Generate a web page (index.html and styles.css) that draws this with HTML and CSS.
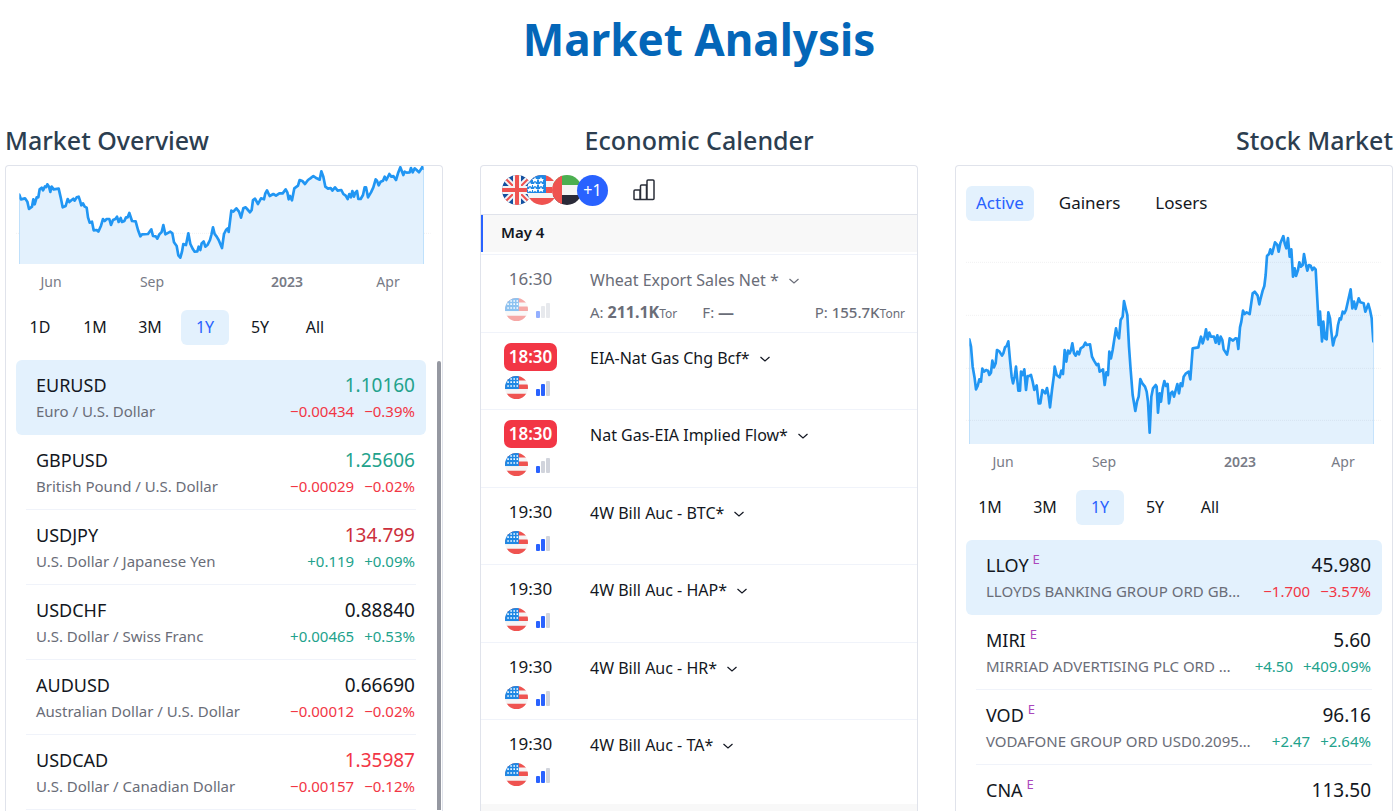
FILE: index.html
```html
<!DOCTYPE html>
<html lang="en">
<head>
    <meta charset="UTF-8">
    <meta name="viewport" content="width=device-width, initial-scale=1.0">
    <title>Market Analysis</title>
    <link rel="stylesheet" href="styles.css">
</head>
<body>
    <!-- shared icons -->
    <svg class="sprite" aria-hidden="true">
        <defs>
            <clipPath id="round"><circle cx="15" cy="15" r="15"/></clipPath>
            <symbol id="flag-us" viewBox="0 0 30 30">
                <g clip-path="url(#round)">
                    <rect width="30" height="30" fill="#f5f5f5"/>
                    <path d="M0 0h30v6H0zM0 11h30v6H0zM0 23h30v7H0z" fill="#ef5350"/>
                    <rect width="18" height="17" fill="#1e88e5"/>
                    <path d="M7 4h2M11 4h2M15 4h2M3 8h2M7 8h2M11 8h2M15 8h2M3 13h2M7 13h2M11 13h2M15 13h2" stroke="#fff" stroke-width="2"/>
                </g>
            </symbol>
            <symbol id="flag-us-big" viewBox="0 0 30 30">
                <g clip-path="url(#round)">
                    <rect width="30" height="30" fill="#f5f5f5"/>
                    <path d="M0 0h30v6H0zM0 12h30v6H0zM0 23h30v7H0z" fill="#ef5350"/>
                    <rect width="19" height="18" fill="#1e88e5"/>
                    <path d="M7 4l1-2 1 2 2 0-1 1 0 2-2-1-2 1 0-2-1-1zM13 4l1-2 1 2 2 0-1 1 0 2-2-1-2 1 0-2-1-1zM2 9l1-2 1 2 2 0-1 1 0 2-2-1-2 1 0-2-1-1zM7 9l1-2 1 2 2 0-1 1 0 2-2-1-2 1 0-2-1-1zM13 9l1-2 1 2 2 0-1 1 0 2-2-1-2 1 0-2-1-1zM2 14l1-2 1 2 2 0-1 1 0 2-2-1-2 1 0-2-1-1zM7 14l1-2 1 2 2 0-1 1 0 2-2-1-2 1 0-2-1-1zM13 14l1-2 1 2 2 0-1 1 0 2-2-1-2 1 0-2-1-1z" fill="#fff"/>
                </g>
            </symbol>
            <symbol id="flag-gb" viewBox="0 0 30 30">
                <g clip-path="url(#round)">
                    <rect width="30" height="30" fill="#1450a0"/>
                    <path d="M0 0l30 30M30 0L0 30" stroke="#f5f5f5" stroke-width="6"/>
                    <path d="M0 0l30 30M30 0L0 30" stroke="#ef5350" stroke-width="2"/>
                    <path d="M15 0v30M0 15h30" stroke="#f5f5f5" stroke-width="8"/>
                    <path d="M15 0v30M0 15h30" stroke="#ef5350" stroke-width="4"/>
                </g>
            </symbol>
            <symbol id="flag-ae" viewBox="0 0 30 30">
                <g clip-path="url(#round)">
                    <rect width="30" height="10" fill="#4caf50"/>
                    <rect y="10" width="30" height="10" fill="#f5f5f5"/>
                    <rect y="20" width="30" height="10" fill="#2a2a38"/>
                    <rect width="10" height="30" fill="#ef5350"/>
                </g>
            </symbol>
            <symbol id="bars" viewBox="0 0 14 16">
                <rect class="bar-1" x="0" y="9" width="4" height="7" rx="1"/>
                <rect class="bar-2" x="5" y="4" width="4" height="12" rx="1"/>
                <rect class="bar-3" x="10" y="1" width="4" height="15" rx="1"/>
            </symbol>
            <symbol id="chevron" viewBox="0 0 10 6">
                <path d="M0.500 1l4.500 4 4.500-4" fill="none" stroke="currentColor" stroke-width="1.200"/>
            </symbol>
        </defs>
    </svg>

    <h1>Market Analysis</h1>

    <main class="columns">
        <section class="column">
            <h2>Market Overview</h2>
            <div class="widget">
                <svg class="chart" viewBox="18 168 1308 294" preserveAspectRatio="none" role="img" aria-label="EURUSD, one year">
                    <path class="grid-line" d="M48 370H1292"/>
                    <path class="area" d="M54 470V254H58L63 268 75 265 82 275 87 297 96 290 100 268 104 283 110 262 115 262 119 238 125 233 129 241 135 229 139 231 142 223 147 230 151 246 155 230 161 238 176 236 182 262 188 292 197 288 203 267 208 276 215 270 220 266 224 272 230 262 236 260 240 272 244 286 249 280 254 290 260 293 264 322 269 338 276 335 281 361 290 360 295 365 303 347 309 327 314 333 320 327 328 327 333 345 339 330 346 327 351 320 356 336 362 324 366 336 373 333 378 322 383 322 388 309 396 333 407 334 414 360 421 379 426 373 444 372 454 358 459 378 467 379 472 386 478 373 485 366 490 345 496 373 511 365 517 370 522 397 530 408 535 436 541 443 546 425 550 402 558 405 565 370 571 402 579 418 584 425 592 424 596 410 601 420 605 400 611 394 616 410 623 404 630 390 634 375 639 352 644 372 650 380 656 390 666 414 672 372 678 360 683 355 686 366 694 302 700 305 709 295 717 305 723 323 730 295 737 292 744 300 750 307 755 300 759 270 765 266 774 282 783 265 792 268 796 250 801 241 809 258 820 252 828 257 838 250 848 250 857 238 862 247 866 268 870 258 876 271 883 235 894 227 899 210 907 213 915 222 924 210 931 205 940 198 950 205 959 209 964 184 970 200 976 230 984 236 992 234 997 242 1005 232 1013 242 1024 240 1030 252 1037 257 1043 267 1048 252 1053 262 1057 243 1062 260 1066 248 1071 243 1075 267 1082 267 1089 255 1094 232 1098 232 1104 262 1113 247 1120 232 1127 208 1131 212 1136 226 1142 215 1149 212 1154 200 1159 210 1168 192 1174 200 1180 198 1188 210 1194 190 1201 172 1210 195 1214 185 1220 188 1229 187 1233 174 1238 187 1244 175 1250 180 1257 187 1263 178 1267 171 1271 176H1275V470"/>
                </svg>
                <div class="axis">
                    <span>Jun</span><span>Sep</span><span class="year">2023</span><span>Apr</span>
                </div>
                <div class="ranges">
                    <button type="button">1D</button>
                    <button type="button">1M</button>
                    <button type="button">3M</button>
                    <button type="button" class="active">1Y</button>
                    <button type="button">5Y</button>
                    <button type="button">All</button>
                </div>
                <div class="quotes scrolled">
                    <div class="quote active">
                        <div class="symbol">EURUSD</div><div class="price up">1.10160</div>
                        <div class="name">Euro / U.S. Dollar</div><div class="change down"><span>−0.00434</span><span>−0.39%</span></div>
                    </div>
                    <div class="quote">
                        <div class="symbol">GBPUSD</div><div class="price up">1.25606</div>
                        <div class="name">British Pound / U.S. Dollar</div><div class="change down"><span>−0.00029</span><span>−0.02%</span></div>
                    </div>
                    <div class="quote">
                        <div class="symbol">USDJPY</div><div class="price falling">134.799</div>
                        <div class="name">U.S. Dollar / Japanese Yen</div><div class="change up"><span>+0.119</span><span>+0.09%</span></div>
                    </div>
                    <div class="quote">
                        <div class="symbol">USDCHF</div><div class="price">0.88840</div>
                        <div class="name">U.S. Dollar / Swiss Franc</div><div class="change up"><span>+0.00465</span><span>+0.53%</span></div>
                    </div>
                    <div class="quote">
                        <div class="symbol">AUDUSD</div><div class="price">0.66690</div>
                        <div class="name">Australian Dollar / U.S. Dollar</div><div class="change down"><span>−0.00012</span><span>−0.02%</span></div>
                    </div>
                    <div class="quote">
                        <div class="symbol">USDCAD</div><div class="price down">1.35987</div>
                        <div class="name">U.S. Dollar / Canadian Dollar</div><div class="change down"><span>−0.00157</span><span>−0.12%</span></div>
                    </div>
                    <div class="scroll-thumb"></div>
                </div>
            </div>
        </section>

        <section class="column">
            <h2 class="center">Economic Calender</h2>
            <div class="widget">
                <div class="filters">
                    <button type="button" class="countries" aria-label="Countries">
                        <svg><use href="#flag-gb"/></svg>
                        <svg><use href="#flag-us-big"/></svg>
                        <svg><use href="#flag-ae"/></svg>
                        <span class="more">+1</span>
                    </button>
                    <button type="button" class="importance" aria-label="Importance">
                        <svg viewBox="0 0 22 22" fill="none" stroke="#2a2e39" stroke-width="1.500">
                            <path d="M1 20.500V12q0-1 1-1h5v9.500M7.500 20.500V7q0-1 1-1h5v14.500M14 20.500V2q0-1 1-1h5q1 0 1 1v17.500q0 1-1 1H2q-1 0-1-1"/>
                        </svg>
                    </button>
                </div>
                <h3 class="day">May 4</h3>
                <div class="events">
                    <div class="event past">
                        <div class="when">
                            <time>16:30</time>
                            <div class="marks"><svg class="flag"><use href="#flag-us"/></svg><svg class="bars low"><use href="#bars"/></svg></div>
                        </div>
                        <div class="what">
                            <div class="title">Wheat Export Sales Net * <svg class="chevron"><use href="#chevron"/></svg></div>
                            <div class="figures">
                                <span>A: <b>211.1K</b><small>Tor</small></span>
                                <span>F: <b>—</b></span>
                                <span>P: <em>155.7K</em><small>Tonr</small></span>
                            </div>
                        </div>
                    </div>
                    <div class="event">
                        <div class="when">
                            <time class="soon">18:30</time>
                            <div class="marks"><svg class="flag"><use href="#flag-us"/></svg><svg class="bars"><use href="#bars"/></svg></div>
                        </div>
                        <div class="what"><div class="title">EIA-Nat Gas Chg Bcf* <svg class="chevron"><use href="#chevron"/></svg></div></div>
                    </div>
                    <div class="event">
                        <div class="when">
                            <time class="soon">18:30</time>
                            <div class="marks"><svg class="flag"><use href="#flag-us"/></svg><svg class="bars low"><use href="#bars"/></svg></div>
                        </div>
                        <div class="what"><div class="title">Nat Gas-EIA Implied Flow* <svg class="chevron"><use href="#chevron"/></svg></div></div>
                    </div>
                    <div class="event">
                        <div class="when">
                            <time>19:30</time>
                            <div class="marks"><svg class="flag"><use href="#flag-us"/></svg><svg class="bars"><use href="#bars"/></svg></div>
                        </div>
                        <div class="what"><div class="title">4W Bill Auc - BTC* <svg class="chevron"><use href="#chevron"/></svg></div></div>
                    </div>
                    <div class="event">
                        <div class="when">
                            <time>19:30</time>
                            <div class="marks"><svg class="flag"><use href="#flag-us"/></svg><svg class="bars"><use href="#bars"/></svg></div>
                        </div>
                        <div class="what"><div class="title">4W Bill Auc - HAP* <svg class="chevron"><use href="#chevron"/></svg></div></div>
                    </div>
                    <div class="event">
                        <div class="when">
                            <time>19:30</time>
                            <div class="marks"><svg class="flag"><use href="#flag-us"/></svg><svg class="bars"><use href="#bars"/></svg></div>
                        </div>
                        <div class="what"><div class="title">4W Bill Auc - HR* <svg class="chevron"><use href="#chevron"/></svg></div></div>
                    </div>
                    <div class="event">
                        <div class="when">
                            <time>19:30</time>
                            <div class="marks"><svg class="flag"><use href="#flag-us"/></svg><svg class="bars"><use href="#bars"/></svg></div>
                        </div>
                        <div class="what"><div class="title">4W Bill Auc - TA* <svg class="chevron"><use href="#chevron"/></svg></div></div>
                    </div>
                </div>
                <div class="next-day"></div>
            </div>
        </section>

        <section class="column">
            <h2 class="right">Stock Market</h2>
            <div class="widget stocks">
                <div class="tabs">
                    <button type="button" class="active">Active</button>
                    <button type="button">Gainers</button>
                    <button type="button">Losers</button>
                </div>
                <svg class="chart" viewBox="18 330 1308 642" preserveAspectRatio="none" role="img" aria-label="LLOY, one year">
                    <path class="area" d="M54 980V658H58L63 680 68 740 74 775 78 808 83 798 88 778 93 785 97 746 102 755 108 750 114 752 118 765 123 758 127 722 132 742 137 730 141 690 148 694 156 707 160 700 165 682 170 678 175 664 180 720 185 770 189 790 194 770 198 740 205 812 210 812 213 755 218 765 223 748 228 810 233 768 238 768 243 765 248 785 253 810 260 796 266 850 271 850 277 810 286 820 291 804 296 830 300 862 306 810 312 765 314 740 320 765 329 772 334 752 339 762 344 690 349 725 354 692 359 700 363 690 367 670 372 700 377 707 382 695 387 703 392 685 400 680 406 668 410 675 420 673 426 710 432 722 440 735 445 732 449 755 454 752 459 748 464 795 469 757 474 765 478 695 483 715 488 690 498 625 502 645 507 655 512 600 518 590 522 543 527 565 532 585 537 680 542 750 548 825 556 873 561 845 566 830 571 777 577 790 585 800 590 815 594 845 599 938 604 830 609 805 617 795 620 800 624 878 629 820 633 845 638 805 643 783 648 798 653 792 657 850 662 820 667 815 672 830 682 792 687 820 692 790 697 798 701 770 708 760 716 755 721 778 728 685 745 682 749 665 753 650 758 670 764 650 768 628 773 658 778 638 783 650 792 650 797 668 802 646 807 672 812 650 817 660 821 688 831 704 835 685 839 655 849 662 856 655 861 656 865 687 870 622 874 605 879 572 884 582 890 577 899 582 908 520 914 515 923 527 928 553 932 535 938 512 943 498 947 465 951 408 957 402 961 388 966 402 975 367 982 375 986 395 991 370 1000 348 1004 370 1009 385 1014 354 1019 410 1024 388 1029 470 1034 445 1038 468 1044 450 1048 427 1053 440 1058 435 1062 402 1067 430 1072 452 1077 435 1082 437 1087 450 1092 443 1097 448 1102 540 1106 615 1110 575 1116 664 1120 605 1125 655 1130 658 1135 577 1140 595 1144 635 1149 676 1154 655 1160 645 1164 615 1169 595 1173 598 1178 575 1183 580 1188 570 1202 508 1207 565 1212 545 1217 567 1226 535 1231 547 1241 550 1246 575 1255 552 1260 570 1265 595 1270 664H1274V980"/>
                    <path class="grid-line" d="M48 427H1292M48 586H1292M48 745H1292M48 901H1292"/>
                </svg>
                <div class="axis">
                    <span>Jun</span><span>Sep</span><span class="year">2023</span><span>Apr</span>
                </div>
                <div class="ranges">
                    <button type="button">1M</button>
                    <button type="button">3M</button>
                    <button type="button" class="active">1Y</button>
                    <button type="button">5Y</button>
                    <button type="button">All</button>
                </div>
                <div class="quotes">
                    <div class="quote active">
                        <div class="symbol">LLOY<sup>E</sup></div><div class="price">45.980</div>
                        <div class="name">LLOYDS BANKING GROUP ORD GB…</div><div class="change down"><span>−1.700</span><span>−3.57%</span></div>
                    </div>
                    <div class="quote">
                        <div class="symbol">MIRI<sup>E</sup></div><div class="price">5.60</div>
                        <div class="name">MIRRIAD ADVERTISING PLC ORD …</div><div class="change up"><span>+4.50</span><span>+409.09%</span></div>
                    </div>
                    <div class="quote">
                        <div class="symbol">VOD<sup>E</sup></div><div class="price">96.16</div>
                        <div class="name">VODAFONE GROUP ORD USD0.2095…</div><div class="change up"><span>+2.47</span><span>+2.64%</span></div>
                    </div>
                    <div class="quote">
                        <div class="symbol">CNA<sup>E</sup></div><div class="price">113.50</div>
                    </div>
                </div>
            </div>
        </section>
    </main>
</body>
</html>
```

FILE: styles.css
```css
* {
    box-sizing: border-box;
}
body {
    margin: 0;
    height: 100vh;
    display: flex;
    flex-direction: column;
    overflow: hidden;
    background: #fff;
    color: #131722;
    font-family: "Trebuchet MS", "Noto Sans", sans-serif;
}
.sprite {
    position: absolute;
    width: 0;
    height: 0;
}
h1, h2 {
    margin: 0;
    font-family: "Noto Sans", "Open Sans", sans-serif;
}
h1 {
    padding: 9px 0 56px;
    color: #0466b8;
    font-size: 44px;
    line-height: 60px;
    text-align: center;
}
h2 {
    color: #2c3e50;
    font-size: 25px;
    font-weight: 500;
    line-height: 30px;
    margin-bottom: 10px;
}
h2.center {
    text-align: center;
}
h2.right {
    text-align: right;
}
button {
    border: none;
    background: none;
    color: inherit;
    font-family: inherit;
    cursor: pointer;
}

.columns {
    flex: 1;
    min-height: 0;
    display: grid;
    grid-template-columns: repeat(3, 1fr);
    gap: 37px;
    padding: 0 5px;
}
.column {
    min-height: 0;
    display: flex;
    flex-direction: column;
}
.widget {
    flex: 1;
    min-height: 0;
    overflow: hidden;
    border: 1px solid #e0e3eb;
    border-bottom: none;
    border-radius: 4px 4px 0 0;
}

/* chart */
.chart {
    display: block;
    width: 100%;
    height: 98px;
}
.stocks .chart {
    height: 214px;
}
/* the side strokes are clipped off, so only the price line shows */
.area {
    fill: #e3f1fd;
    stroke: #2196f3;
    stroke-width: 8;
    stroke-linejoin: round;
    clip-path: inset(0 8px);
}
.grid-line {
    fill: none;
    stroke: #2a2e39;
    stroke-opacity: 0.1;
    stroke-width: 2;
    stroke-dasharray: 3 3;
}
.axis {
    display: grid;
    grid-template-columns: 90fr 112fr 158fr 44fr 32fr;
    padding: 8px 0;
    color: #787b86;
    font-size: 14px;
    line-height: 20px;
    text-align: center;
}
.stocks .axis {
    grid-template-columns: 94fr 108fr 164fr 42fr 28fr;
}
.year {
    font-weight: 600;
}

.ranges, .tabs {
    display: flex;
    gap: 7px;
    padding: 10px 10px 15px;
}
.tabs {
    gap: 15px;
    padding: 20px 10px 9px;
}
.ranges button, .tabs button {
    height: 35px;
    padding: 0 10px 2px;
    border-radius: 6px;
    font-size: 16px;
}
.tabs button {
    font-size: 17px;
}
.ranges button {
    min-width: 48px;
}
.ranges .active, .tabs .active {
    background: #e3f1fd;
    color: #2962ff;
}

/* quotes */
.quotes {
    position: relative;
    padding: 0 10px;
}
.scrolled {
    padding-right: 16px;
}
.scroll-thumb {
    position: absolute;
    top: 1px;
    right: 1px;
    bottom: 0;
    width: 4px;
    border-radius: 2px 2px 0 0;
    background: #9598a1;
}
.quote {
    display: grid;
    grid-template-columns: 1fr auto;
    column-gap: 10px;
    align-content: start;
    height: 75px;
    margin: 0 10px;
    padding: 11px 1px 0 10px;
    border-bottom: 1px solid #f0f3fa;
}
.quote.active {
    margin: 0;
    padding: 11px 11px 0 20px;
    border: none;
    border-radius: 6px;
    background: #e3f1fd;
}
.symbol, .price {
    font-size: 18px;
    line-height: 28px;
}
.price {
    font-size: 19px;
    text-align: right;
}
.symbol sup {
    margin-left: 4px;
    color: #ab47bc;
    font-size: 13px;
    line-height: 0;
    vertical-align: 8px;
}
.name, .change {
    font-size: 15px;
    line-height: 25px;
    white-space: nowrap;
}
.name {
    color: #6a6d78;
}
.change {
    display: flex;
    justify-content: flex-end;
    gap: 10px;
}
.up {
    color: #22a28c;
}
.down {
    color: #f23645;
}
.falling {
    color: #cc2f3c;
}

/* calendar */
.filters {
    display: flex;
    align-items: center;
    gap: 25px;
    height: 49px;
    padding-left: 21px;
    border-bottom: 1px solid #e0e3eb;
}
.countries, .importance {
    display: flex;
    padding: 0;
}
.countries svg {
    width: 30px;
    height: 30px;
    margin-right: -5px;
}
.more {
    width: 31px;
    border-radius: 50%;
    background: #2962ff;
    color: #fff;
    font-size: 16px;
    line-height: 31px;
    z-index: 1;
}
.importance svg {
    width: 22px;
    height: 22px;
}
.day {
    margin: 0;
    padding: 0 0 2px 18px;
    border-left: 2px solid #2962ff;
    background: #f8f8f8;
    font-size: 15px;
    font-weight: 600;
    line-height: 35px;
}
.events {
    margin-top: 2px;
    border-top: 1px solid #f0f3fa;
}
.event {
    display: flex;
    height: 77px;
    padding: 10px 9px 0 23px;
    border-bottom: 1px solid #f0f3fa;
}
.event:nth-child(odd) {
    height: 78px;
}
.event:last-child {
    height: 84px;
    border: none;
}
.when {
    width: 86px;
}
.event time {
    display: block;
    width: 53px;
    border-radius: 7px;
    font-size: 17px;
    line-height: 28px;
    text-align: center;
}
.event .soon {
    background: #f23645;
    color: #fff;
    font-weight: 600;
}
.marks {
    display: flex;
    align-items: center;
    gap: 8px;
    margin-top: 5px;
    padding-left: 1px;
}
.flag {
    width: 23px;
    height: 23px;
}
.bars {
    width: 14px;
    height: 16px;
    --mid: #2962ff;
}
.bars.low {
    --mid: #d1d4dc;
}
.bar-1 {
    fill: #2962ff;
}
.bar-2 {
    fill: var(--mid);
}
.bar-3 {
    fill: #d1d4dc;
}
.what {
    flex: 1;
    min-width: 0;
}
.title {
    font-size: 16px;
    line-height: 30px;
}
.chevron {
    width: 10px;
    height: 6px;
    margin: 0 0 2px 6px;
}
.past {
    color: #6a6d78;
}
.past .marks {
    opacity: 0.5;
}
.figures {
    display: grid;
    grid-template-columns: 112fr 112fr 93fr;
    font-size: 15px;
    line-height: 34px;
    white-space: nowrap;
}
.figures b {
    font-size: 16px;
}
.figures em {
    font-style: normal;
    font-weight: 500;
}
.figures small {
    font-size: 12px;
}
.next-day {
    height: 37px;
    background: #f8f8f8;
}
```
